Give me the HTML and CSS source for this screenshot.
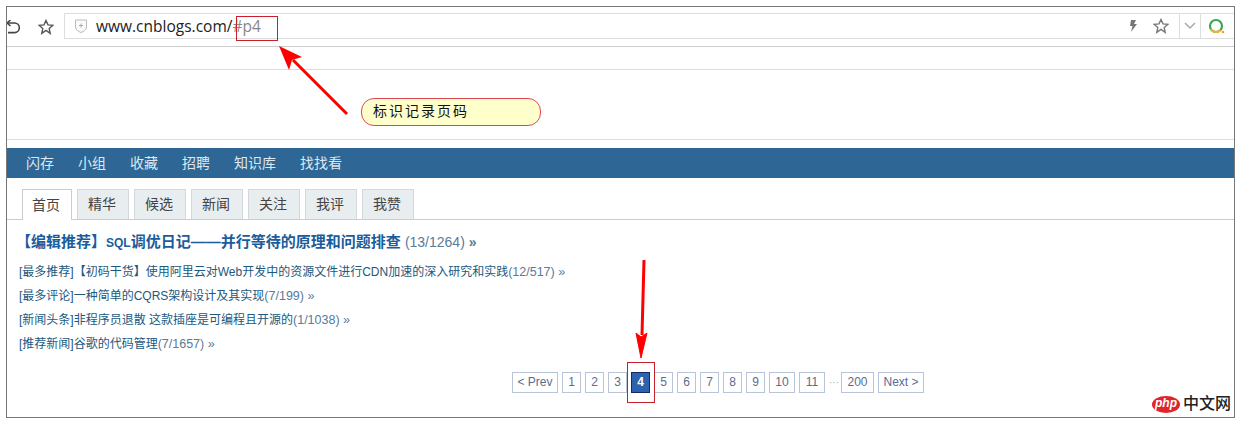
FILE: index.html
```html
<!DOCTYPE html>
<html lang="zh-CN">
<head>
  <meta charset="UTF-8" />
  <title>www.cnblogs.com/#p4</title>
  <link rel="stylesheet" href="styles.css">
</head>
<body>
  <div class="shot">
    <div class="toolbar">
      <svg class="tool-icon back" width="14" height="14" viewBox="0 0 14 14"><path d="M0 3h7.500a4.800 4.800 0 0 1 0 9.600H1" fill="none" stroke="#444" stroke-width="1.600"/><path d="M3.500 0L0 3l3.500 3" fill="none" stroke="#444" stroke-width="1.600"/></svg>
      <svg class="tool-icon star-left" width="16" height="16" viewBox="0 0 16 16"><path d="M8 1.500l2 4.400 4.800.5-3.600 3.200 1 4.700L8 11.400l-4.200 2.900 1-4.700L1.200 6.400 6 5.900z" fill="none" stroke="#555" stroke-width="1.400"/></svg>
      <div class="address">
        <svg class="shield" width="14" height="16" viewBox="0 0 14 16"><path d="M1.500 2h11v7c0 3-3 4.500-5.500 5.500C4.500 13.500 1.500 12 1.500 9z" fill="#fafafa" stroke="#bbb"/><path d="M7 5.500v4M5 7.500h4" stroke="#aaa"/></svg>
        <span class="url">www.cnblogs.com/<span class="hash">#p4</span></span>
        <svg class="bolt" width="10" height="14" viewBox="0 0 10 14"><path d="M3 1h5L6 5h3l-6 8 1.500-6H2z" fill="#777"/></svg>
        <svg class="star-right" width="16" height="16" viewBox="0 0 16 16"><path d="M8 1.500l2 4.400 4.800.5-3.600 3.200 1 4.700L8 11.400l-4.200 2.900 1-4.700L1.200 6.400 6 5.900z" fill="none" stroke="#777" stroke-width="1.400"/></svg>
        <div class="addr-cell"><svg width="12" height="8" viewBox="0 0 12 8"><path d="M1 1l5 5 5-5" fill="none" stroke="#aaa" stroke-width="1.500"/></svg></div>
        <div class="addr-cell last"><svg width="17" height="16" viewBox="0 0 17 16"><circle cx="8" cy="8" r="6" fill="none" stroke="#3aa655" stroke-width="2.200"/><path d="M2.800 11a6 6 0 0 0 9.700 1" fill="none" stroke="#f0b429" stroke-width="2.200"/><circle cx="15" cy="14" r="1.300" fill="#f0a020"/></svg></div>
      </div>
    </div>
    <div class="strip"></div>
    <div class="blank"></div>

    <ul class="nav">
      <li>闪存</li>
      <li>小组</li>
      <li>收藏</li>
      <li>招聘</li>
      <li>知识库</li>
      <li>找找看</li>
    </ul>

    <div class="tabs">
      <a class="tab active">首页</a>
      <a class="tab">精华</a>
      <a class="tab">候选</a>
      <a class="tab">新闻</a>
      <a class="tab">关注</a>
      <a class="tab">我评</a>
      <a class="tab">我赞</a>
    </div>

    <div class="headline"><b>【编辑推荐】<span class="latin">SQL</span>调优日记——并行等待的原理和问题排查</b> <span class="count">(13/1264) <b>»</b></span></div>
    <ul class="links">
      <li>[最多推荐]【初码干货】使用阿里云对Web开发中的资源文件进行CDN加速的深入研究和实践<span class="count">(12/517) »</span></li>
      <li>[最多评论]一种简单的CQRS架构设计及其实现<span class="count">(7/199) »</span></li>
      <li>[新闻头条]非程序员退散 这款插座是可编程且开源的<span class="count">(1/1038) »</span></li>
      <li>[推荐新闻]谷歌的代码管理<span class="count">(7/1657) »</span></li>
    </ul>

    <div class="pager">
      <a class="wide">&lt; Prev</a>
      <a>1</a>
      <a>2</a>
      <a>3</a>
      <a class="current">4</a>
      <a>5</a>
      <a>6</a>
      <a>7</a>
      <a>8</a>
      <a>9</a>
      <a class="two">10</a>
      <a class="two">11</a>
      <span class="dots">···</span>
      <a class="three">200</a>
      <a class="wide">Next &gt;</a>
    </div>

    <!-- 标注 -->
    <div class="mark mark-url"></div>
    <div class="mark mark-page"></div>
    <div class="bubble">标识记录页码</div>
    <svg class="arrows" width="1241" height="424" viewBox="0 0 1241 424">
      <path d="M347 114L293 60" stroke="#f00" stroke-width="3" fill="none"/>
      <path d="M279 46l23 11-10 3-3 10z" fill="#f00"/>
      <path d="M644 260L642 335" stroke="#f00" stroke-width="3" fill="none"/>
      <path d="M641 358l-5-25 5 4 6-4z" fill="#f00" stroke="#f00"/>
    </svg>
    <div class="watermark"><span class="php">php</span><span class="cn">中文网</span></div>
  </div>
</body>
</html>
```

FILE: styles.css
```css
* { margin: 0; padding: 0; box-sizing: border-box; }
html, body { height: 100%; }
body { background: #fff; font-family: "Liberation Sans", "Noto Sans CJK SC", sans-serif; color: #333; overflow: hidden; }
ul { list-style: none; }

.shot { position: relative; width: 1229px; height: 412px; margin: 6px 0 0 6px; border: 1px solid #777; background: #fff; overflow: hidden; }

/* 浏览器工具栏 */
.toolbar { display: flex; align-items: center; height: 40px; border-bottom: 1px solid #ccc; }
.tool-icon { flex: none; }
.star-left { margin-left: 17px; }
.address { display: flex; align-items: center; flex: 1; height: 26px; margin: 0 0 1px 10px; border: 1px solid #ddd; border-right: none; }
.shield { margin-left: 9px; }
.url { flex: 1; margin: -1px 0 0 8px; font-family: "Open Sans", "Noto Sans", sans-serif; font-size: 15.500px; color: #222; white-space: nowrap; }
.hash { color: #888; }
.bolt { margin-right: 15px; }
.star-right { margin-right: 10px; }
.addr-cell { display: flex; align-items: center; justify-content: center; width: 21px; height: 100%; border-left: 1px solid #ddd; }
.addr-cell.last { width: 34px; justify-content: flex-start; padding-left: 7px; }

.strip { height: 23px; border-bottom: 1px solid #ddd; }
.blank { height: 70px; border-bottom: 1px solid #ddd; margin-bottom: 8px; }

/* 导航 */
.nav { display: flex; gap: 24px; align-items: center; height: 30px; padding: 0 0 2px 19px; background: #2e6795; color: #dfe8ef; font-size: 14px; }

/* 标签 */
.tabs { display: flex; gap: 5px; align-items: flex-end; height: 31px; margin-top: 11px; padding-left: 15px; border-bottom: 1px solid #ccc; }
.tab { display: flex; align-items: center; justify-content: center; width: 52px; height: 30px; padding: 0 2px 3px 0; background: #e8edf0; border: 1px solid #d4d8da; border-bottom: none; font-size: 14px; color: #444; }
.tab.active { width: 50px; height: 31px; margin-bottom: -1px; background: #fff; border-color: #ccc; }

/* 内容 */
.headline { margin: 11px 0 0 9px; height: 22px; line-height: 22px; font-size: 15px; color: #1a5c9c; white-space: nowrap; }
.headline .latin { font-size: 12px; }
.headline .count { font-size: 14px; }
.count { color: #5a7a99; }
.links { margin: 7px 0 0 12px; font-size: 12px; color: #21587e; }
.links li { height: 24px; line-height: 24px; white-space: nowrap; }
.links .count { font-size: 12.500px; }

.pager { display: flex; gap: 4px; align-items: center; margin: 16px 0 0 505px; font-size: 12px; }
.pager a { display: block; width: 19px; height: 21px; line-height: 19px; text-align: center; border: 1px solid #b8c4d8; color: #5a6d90; }
.pager a.two { width: 26px; }
.pager a.three { width: 33px; }
.pager a.wide { width: 46px; }
.pager a.current { background: #2d62ac; border-color: #12296b; color: #fff; font-weight: bold; }
.pager .dots { width: 8px; text-align: center; color: #aaa; font-size: 10px; }

/* 标注 */
.mark { position: absolute; border: 1px solid #c8202a; }
.mark-url { left: 229px; top: 9px; width: 42px; height: 25px; }
.mark-page { left: 620px; top: 355px; width: 28px; height: 41px; }
.bubble { position: absolute; left: 354px; top: 91px; width: 180px; height: 28px; padding-left: 11px; line-height: 24px; font-size: 14px; letter-spacing: 2px; color: #111; background: #ffffcc; border: 1px solid #e04850; border-radius: 13px; }
.arrows { position: absolute; left: -7px; top: -7px; pointer-events: none; }

.watermark { position: absolute; right: 3px; bottom: 3px; display: flex; align-items: center; gap: 3px; }
.php { display: block; width: 28px; height: 17px; line-height: 15px; text-align: center; border-radius: 50%; background: #e0242a; color: #fff; font-style: italic; font-weight: bold; font-size: 12px; }
.cn { font-size: 16px; line-height: 20px; font-weight: 500; color: #222; }
```
